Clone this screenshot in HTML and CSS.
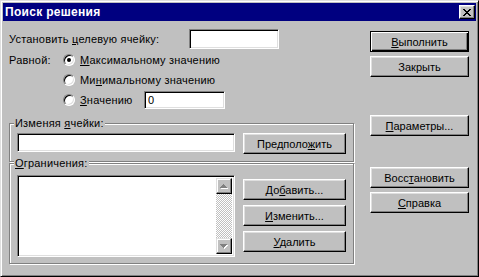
FILE: index.html
```html
<html>
<head>
<link rel="stylesheet" href="styles.css">
</head>
<body>
<div class="window">
  <div class="titlebar">
    <span class="title">Поиск решения</span>
    <span class="closebtn">
      <svg width="8" height="7" viewBox="0 0 8 7" shape-rendering="crispEdges">
        <rect x="0" y="0" width="2" height="1"/><rect x="6" y="0" width="2" height="1"/>
        <rect x="1" y="1" width="2" height="1"/><rect x="5" y="1" width="2" height="1"/>
        <rect x="2" y="2" width="4" height="1"/>
        <rect x="3" y="3" width="2" height="1"/>
        <rect x="2" y="4" width="4" height="1"/>
        <rect x="1" y="5" width="2" height="1"/><rect x="5" y="5" width="2" height="1"/>
        <rect x="0" y="6" width="2" height="1"/><rect x="6" y="6" width="2" height="1"/>
      </svg>
    </span>
  </div>

  <div class="dialog">
    <div class="main">
      <div class="target">
        <span class="target-label">Установить <u>ц</u>елевую ячейку:</span>
        <input type="text" class="field target-field">
      </div>

      <div class="equal">
        <span class="equal-label">Равной:</span>
        <div class="options">
          <div class="option"><span class="radio checked"></span><span><u>М</u>аксимальному значению</span></div>
          <div class="option"><span class="radio"></span><span>Ми<u>н</u>имальному значению</span></div>
          <div class="option"><span class="radio"></span><span class="value-label"><u>З</u>начению</span><input type="text" class="field value-field" value="0"></div>
        </div>
      </div>

      <div class="group change">
        <span class="legend">Изменяя <u>я</u>чейки:</span>
        <div class="group-row">
          <input type="text" class="field change-field">
          <button class="btn wide">Предполо<u>ж</u>ить</button>
        </div>
      </div>

      <div class="group limits">
        <span class="legend"><u>О</u>граничения:</span>
        <div class="group-row">
          <div class="listbox">
            <div class="scrollbar">
              <span class="arrow">
                <svg width="8" height="5" viewBox="0 0 8 5" shape-rendering="crispEdges">
                  <g fill="#fff"><rect x="4" y="1" width="1" height="1"/><rect x="3" y="2" width="3" height="1"/><rect x="2" y="3" width="5" height="1"/><rect x="1" y="4" width="7" height="1"/></g>
                  <g fill="#808080"><rect x="3" y="0" width="1" height="1"/><rect x="2" y="1" width="3" height="1"/><rect x="1" y="2" width="5" height="1"/><rect x="0" y="3" width="7" height="1"/></g>
                </svg>
              </span>
              <span class="track"></span>
              <span class="arrow">
                <svg width="8" height="5" viewBox="0 0 8 5" shape-rendering="crispEdges">
                  <g fill="#fff"><rect x="1" y="1" width="7" height="1"/><rect x="2" y="2" width="5" height="1"/><rect x="3" y="3" width="3" height="1"/><rect x="4" y="4" width="1" height="1"/></g>
                  <g fill="#808080"><rect x="0" y="0" width="7" height="1"/><rect x="1" y="1" width="5" height="1"/><rect x="2" y="2" width="3" height="1"/><rect x="3" y="3" width="1" height="1"/></g>
                </svg>
              </span>
            </div>
          </div>
          <div class="stack">
            <button class="btn wide">До<u>б</u>авить...</button>
            <button class="btn wide"><u>И</u>зменить...</button>
            <button class="btn wide"><u>У</u>далить</button>
          </div>
        </div>
      </div>
    </div>

    <div class="side">
      <button class="btn default run"><u>В</u>ыполнить</button>
      <button class="btn close-dlg">Закрыть</button>
      <button class="btn options-btn"><u>П</u>араметры...</button>
      <button class="btn reset">Восс<u>т</u>ановить</button>
      <button class="btn help"><u>С</u>правка</button>
    </div>
  </div>
</div>
</body>
</html>
```

FILE: styles.css
```css
body {
  margin: 0;
  font-family: "Liberation Sans", Arial, sans-serif;
  font-size: 11px;
  letter-spacing: 0.2px;
  color: #000;
  background: #c0c0c0;
}

/* Window frame */
.window {
  width: 479px;
  height: 277px;
  box-sizing: border-box;
  background: #c0c0c0;
  border: 1px solid;
  border-color: #dfdfdf #000 #000 #dfdfdf;
  box-shadow: inset 1px 1px #fff, inset -1px -1px #808080;
  padding: 2px;
}

.titlebar {
  height: 18px;
  background: #000080;
  display: flex;
  align-items: center;
  padding-left: 2px;
}

.title {
  flex: 1;
  color: #fff;
  font-size: 12px;
  font-weight: bold;
  letter-spacing: 0.3px;
}

.closebtn {
  width: 16px;
  height: 14px;
  box-sizing: border-box;
  margin-right: 1px;
  background: #c0c0c0;
  border: 1px solid;
  border-color: #fff #000 #000 #fff;
  box-shadow: inset -1px -1px #808080, inset 1px 1px #dfdfdf;
  display: flex;
  align-items: center;
  justify-content: center;
}

/* Dialog body */
.dialog {
  display: flex;
  padding-left: 6px;
}

.main {
  width: 346px;
  display: flex;
  flex-direction: column;
}

.target {
  display: flex;
  align-items: center;
  height: 20px;
  margin-top: 8px;
}

.target-label {
  width: 180px;
}

.target-field {
  width: 90px;
  height: 20px;
}

.equal {
  display: flex;
  margin-top: 1px;
}

.equal-label {
  width: 54px;
  line-height: 20px;
}

.option {
  display: flex;
  align-items: center;
  gap: 5px;
  height: 20px;
}

.value-label {
  width: 59px;
}

.value-field {
  width: 81px;
  height: 18px;
}

/* Sunken fields */
.field {
  box-sizing: border-box;
  margin: 0;
  padding: 0 3px;
  font: inherit;
  color: #000;
  background: #fff;
  border: 1px solid;
  border-color: #808080 #fff #fff #808080;
  box-shadow: inset 1px 1px #000, inset -1px -1px #dfdfdf;
  outline: none;
}

.radio {
  width: 12px;
  height: 12px;
  box-sizing: border-box;
  border-radius: 50%;
  border: 1px solid;
  border-color: #808080 #fff #fff #808080;
  box-shadow: inset 1px 1px #000, inset -1px -1px #dfdfdf;
  background: #fff;
  display: flex;
  align-items: center;
  justify-content: center;
}

.radio.checked::after {
  content: "";
  width: 4px;
  height: 4px;
  border-radius: 50%;
  background: #000;
}

/* Group boxes */
.group {
  box-sizing: border-box;
  width: 345px;
  border: 1px solid #808080;
  box-shadow: 1px 1px 0 #fff, inset 1px 1px 0 #fff;
  padding-left: 7px;
}

.group.change {
  height: 39px;
  margin-top: 13px;
}

.group.limits {
  height: 101px;
  margin-top: 1px;
}

.legend {
  display: block;
  width: fit-content;
  line-height: 13px;
  margin: -7px 0 0 -3px;
  padding: 0 1px;
  background: #c0c0c0;
}

.group-row {
  display: flex;
  gap: 8px;
}

.change .group-row {
  padding-top: 3px;
}

.limits .group-row {
  padding-top: 5px;
}

.change-field {
  width: 218px;
  height: 19px;
}

.listbox {
  width: 218px;
  height: 82px;
  box-sizing: border-box;
  padding: 2px;
  background: #fff;
  border: 1px solid;
  border-color: #808080 #fff #fff #808080;
  box-shadow: inset 1px 1px #000, inset -1px -1px #dfdfdf;
  display: flex;
  justify-content: flex-end;
}

.scrollbar {
  width: 16px;
  display: flex;
  flex-direction: column;
}

.arrow {
  height: 16px;
  box-sizing: border-box;
  background: #c0c0c0;
  border: 1px solid;
  border-color: #dfdfdf #000 #000 #dfdfdf;
  box-shadow: inset -1px -1px #808080, inset 1px 1px #fff;
  display: flex;
  align-items: center;
  justify-content: center;
}

.track {
  flex: 1;
  background: repeating-conic-gradient(#c0c0c0 0 25%, #fff 0 50%) 0 0 / 2px 2px;
}

.stack {
  display: flex;
  flex-direction: column;
  gap: 5px;
  padding-top: 4px;
}

/* Push buttons */
.btn {
  box-sizing: border-box;
  height: 21px;
  margin: 0;
  padding: 0;
  font: inherit;
  color: #000;
  background: #c0c0c0;
  border: 1px solid;
  border-color: #fff #000 #000 #fff;
  box-shadow: inset -1px -1px #808080, inset 1px 1px #dfdfdf;
}

.btn.default {
  border-color: #000;
  box-shadow: inset 1px 1px #fff, inset -1px -1px #000, inset -2px -2px #808080;
}

.btn.wide {
  width: 103px;
}

.side {
  width: 99px;
  margin-left: 15px;
  display: flex;
  flex-direction: column;
}

.side .btn {
  width: 99px;
}

.run { margin-top: 10px; }
.close-dlg { margin-top: 4px; }
.options-btn { margin-top: 38px; }
.reset { margin-top: 31px; }
.help { margin-top: 4px; }
```
